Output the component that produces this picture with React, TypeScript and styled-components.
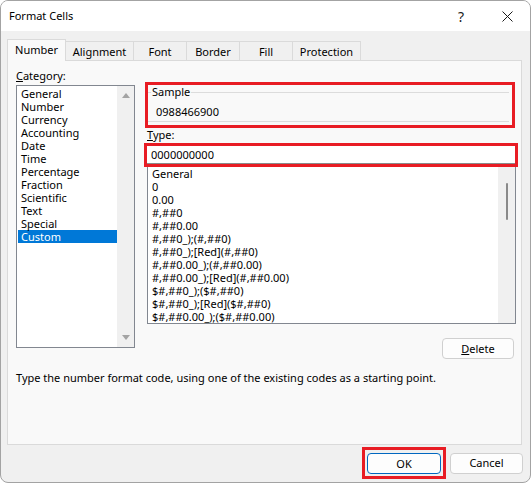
import React from "react";
import styled, { createGlobalStyle } from "styled-components";

const Global = createGlobalStyle`
  html, body { margin: 0; padding: 0; background: #ffffff; }
  body { font-family: "Noto Sans", "DejaVu Sans", sans-serif; font-size: 11px; color: #000; }
  * { box-sizing: border-box; }
`;

const Window = styled.div`
  width: 531px;
  height: 483px;
  border: 1px solid #a3a3a3;
  border-radius: 8px;
  overflow: hidden;
  background: #f0f0f0;
  display: flex;
  flex-direction: column;
`;

const TitleBar = styled.div`
  height: 30px;
  background: #ffffff;
  display: flex;
  align-items: center;
`;

const Title = styled.div`
  flex: 1;
  padding-left: 8px;
  font-size: 11px;
  line-height: 14px;
`;

const CaptionButton = styled.div`
  width: 46px;
  height: 30px;
  display: flex;
  align-items: center;
  justify-content: center;
  font-size: 14px;
  color: #1a1a1a;
`;

const Client = styled.div`
  flex: 1;
  display: flex;
  flex-direction: column;
  padding: 8px 8px 0 6px;
`;

const TabStrip = styled.div`
  height: 21px;
  display: flex;
  align-items: flex-end;
`;

const Tab = styled.div<{ $w: number; $active?: boolean }>`
  position: relative;
  width: ${(p) => p.$w}px;
  height: ${(p) => (p.$active ? 22 : 19)}px;
  margin-bottom: ${(p) => (p.$active ? -1 : 0)}px;
  margin-left: -1px;
  z-index: ${(p) => (p.$active ? 2 : 1)};
  background: ${(p) => (p.$active ? "#f9f9f9" : "#f0f0f0")};
  border: 1px solid #dadada;
  border-bottom: none;
  display: flex;
  align-items: center;
  justify-content: center;
  padding-bottom: ${(p) => (p.$active ? 2 : 0)}px;
  &:first-child { margin-left: 0; }
`;

const Panel = styled.div`
  height: 385px;
  background: #f9f9f9;
  border: 1px solid #dadada;
  padding: 7px 3px 0 8px;
  display: flex;
  flex-direction: column;
`;

const TopRow = styled.div`
  display: flex;
  gap: 9px;
`;

const LeftColumn = styled.div`
  width: 119px;
  display: flex;
  flex-direction: column;
`;

const RightColumn = styled.div`
  flex: 1;
  display: flex;
  flex-direction: column;
  padding-top: 14px;
`;

const Label = styled.div<{ $indent?: number; $h?: number }>`
  line-height: ${(p) => p.$h ?? 16}px;
  height: ${(p) => p.$h ?? 16}px;
  margin-bottom: 1px;
  padding-left: ${(p) => p.$indent ?? 0}px;
`;

const ListBox = styled.div<{ $h: number }>`
  height: ${(p) => p.$h}px;
  background: #ffffff;
  border: 1px solid #828790;
  display: flex;
  overflow: hidden;
`;

const Items = styled.div<{ $pad: number }>`
  flex: 1;
  padding-top: ${(p) => p.$pad}px;
  overflow: hidden;
`;

const Item = styled.div<{ $selected?: boolean; $indent: number }>`
  height: 13px;
  line-height: 13px;
  margin-left: 1px;
  padding-left: ${(p) => p.$indent}px;
  white-space: nowrap;
  background: ${(p) => (p.$selected ? "#0078d7" : "transparent")};
  color: ${(p) => (p.$selected ? "#ffffff" : "#000000")};
`;

const ArrowBar = styled.div`
  width: 17px;
  background: #f0f0f0;
  display: flex;
  flex-direction: column;
  justify-content: space-between;
  align-items: center;
  padding: 7px 0;
`;

const ThinBar = styled.div`
  width: 17px;
  background: #f0f0f0;
  display: flex;
  justify-content: center;
  padding-top: 16px;
`;

const Thumb = styled.div`
  width: 2px;
  height: 37px;
  border-radius: 1px;
  background: #8a8a8a;
`;

const Annotated = styled.div`
  border: 3px solid #e81c24;
`;

const SampleFrame = styled(Annotated)`
  margin: 0 3px 0 1px;
  height: 46px;
  padding-right: 3px;
`;

const Group = styled.fieldset`
  margin: 0;
  border: none;
  border-top: 1px solid #dcdcdc;
  border-bottom: 1px solid #dcdcdc;
  padding: 0 0 2px 3px;
`;

const Legend = styled.legend`
  padding: 0 1px;
  line-height: 14px;
`;

const SampleValue = styled.div`
  margin-top: 6px;
  line-height: 14px;
  padding-left: 5px;
`;

const TypeFrame = styled(Annotated)`
  height: 24px;
`;

const TypeInput = styled.div`
  height: 18px;
  background: #ffffff;
  border-bottom: 1px solid #8a8a8a;
  line-height: 17px;
  padding-left: 4px;
`;

const FormatBox = styled(ListBox)`
  margin: 0 2px 0 3px;
  border-top: none;
`;

const Button = styled.div<{ $w: number; $primary?: boolean }>`
  width: ${(p) => p.$w}px;
  height: 21px;
  border: 1px solid ${(p) => (p.$primary ? "#0067c0" : "#d0d0d0")};
  border-radius: 4px;
  background: #fdfdfd;
  display: flex;
  align-items: center;
  justify-content: center;
  line-height: 14px;
`;

const DeleteButton = styled(Button)`
  align-self: flex-end;
  margin: 14px 4px 0 0;
`;

const Description = styled.div`
  margin-top: 11px;
  line-height: 15px;
`;

const ButtonRow = styled.div`
  display: flex;
  justify-content: flex-end;
  align-items: center;
  gap: 4px;
  margin-top: 2px;
  margin-right: -1px;
`;

const OkFrame = styled(Annotated)`
  padding: 3px 2px 2px 2px;
`;

const Tri = ({ down }: { down?: boolean }) => (
  <svg width="8" height="5" viewBox="0 0 8 5">
    <path d={down ? "M0 0 L8 0 L4 5 Z" : "M0 5 L8 5 L4 0 Z"} fill="#a3a3a3" />
  </svg>
);

const categories = [
  "General",
  "Number",
  "Currency",
  "Accounting",
  "Date",
  "Time",
  "Percentage",
  "Fraction",
  "Scientific",
  "Text",
  "Special",
  "Custom",
];

const formats = [
  "General",
  "0",
  "0.00",
  "#,##0",
  "#,##0.00",
  "#,##0_);(#,##0)",
  "#,##0_);[Red](#,##0)",
  "#,##0.00_);(#,##0.00)",
  "#,##0.00_);[Red](#,##0.00)",
  "$#,##0_);($#,##0)",
  "$#,##0_);[Red]($#,##0)",
  "$#,##0.00_);($#,##0.00)",
];

const tabs: [string, number][] = [
  ["Number", 59],
  ["Alignment", 69],
  ["Font", 54],
  ["Border", 54],
  ["Fill", 54],
  ["Protection", 69],
];

export default function App() {
  return (
    <>
      <Global />
      <Window>
        <TitleBar>
          <Title>Format Cells</Title>
          <CaptionButton>?</CaptionButton>
          <CaptionButton>
            <svg width="11" height="11" viewBox="0 0 11 11">
              <path d="M0.5 0.5 L10.5 10.5 M10.5 0.5 L0.5 10.5" stroke="#1a1a1a" strokeWidth="1" />
            </svg>
          </CaptionButton>
        </TitleBar>
        <Client>
          <TabStrip>
            {tabs.map(([t, w], i) => (
              <Tab key={t} $w={w} $active={i === 0}>
                {t}
              </Tab>
            ))}
          </TabStrip>
          <Panel>
            <TopRow>
              <LeftColumn>
                <Label>
                  <u>C</u>ategory:
                </Label>
                <ListBox $h={263}>
                  <Items $pad={1}>
                    {categories.map((c) => (
                      <Item key={c} $indent={3} $selected={c === "Custom"}>
                        {c}
                      </Item>
                    ))}
                  </Items>
                  <ArrowBar>
                    <Tri />
                    <Tri down />
                  </ArrowBar>
                </ListBox>
              </LeftColumn>
              <RightColumn>
                <SampleFrame>
                  <Group>
                    <Legend>Sample</Legend>
                    <SampleValue>0988466900</SampleValue>
                  </Group>
                </SampleFrame>
                <Label $indent={3} $h={14}>
                  <u>T</u>ype:
                </Label>
                <TypeFrame>
                  <TypeInput>0000000000</TypeInput>
                </TypeFrame>
                <FormatBox $h={157}>
                  <Items $pad={0}>
                    {formats.map((f) => (
                      <Item key={f} $indent={3}>
                        {f}
                      </Item>
                    ))}
                  </Items>
                  <ThinBar>
                    <Thumb />
                  </ThinBar>
                </FormatBox>
                <DeleteButton $w={72}>
                  <span>
                    <u>D</u>elete
                  </span>
                </DeleteButton>
              </RightColumn>
            </TopRow>
            <Description>
              Type the number format code, using one of the existing codes as a starting point.
            </Description>
          </Panel>
          <ButtonRow>
            <OkFrame>
              <Button $w={74} $primary>
                OK
              </Button>
            </OkFrame>
            <Button $w={73}>Cancel</Button>
          </ButtonRow>
        </Client>
      </Window>
    </>
  );
}
